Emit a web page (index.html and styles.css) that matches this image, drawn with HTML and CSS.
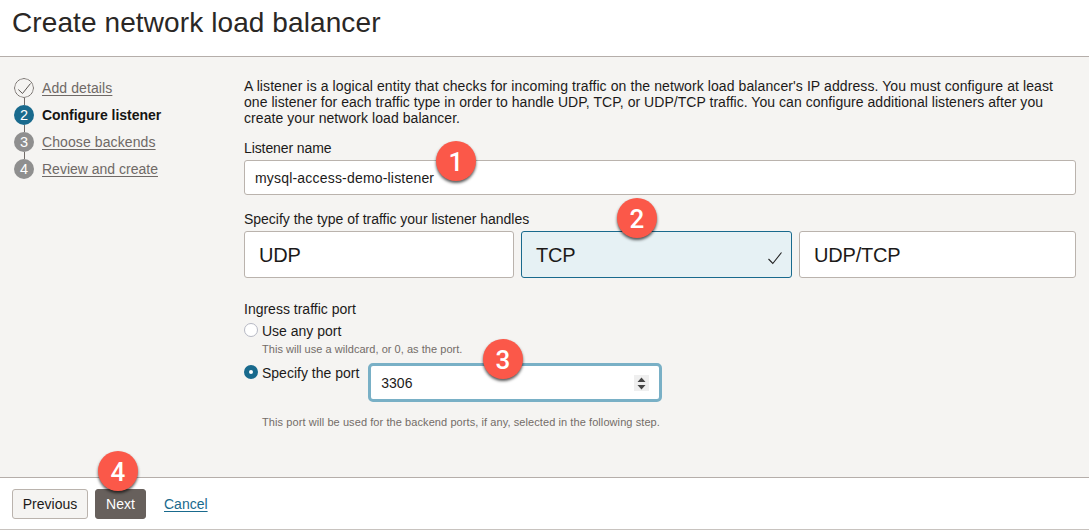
FILE: index.html
```html
<!DOCTYPE html>
<html lang="en">
<head>
<meta charset="utf-8">
<title>Create network load balancer</title>
<link rel="stylesheet" href="styles.css">
</head>
<body>
<div class="page">
  <header class="header"><h1 class="title">Create network load balancer</h1></header>
  <main class="main">
    <nav class="steps">
      <div class="step"><svg class="dot" viewBox="0 0 20 20"><circle cx="10" cy="10" r="9.5" fill="none" stroke="#716b68"/><path d="M4.300 11.500l4.200 4L16.500 5.500" fill="none" stroke="#5c5754"/></svg><a class="step-link s1">Add details</a></div>
      <div class="step"><span class="dot current">2</span><b class="step-name">Configure listener</b></div>
      <div class="step"><span class="dot">3</span><a class="step-link s3">Choose backends</a></div>
      <div class="step"><span class="dot">4</span><a class="step-link s4">Review and create</a></div>
    </nav>
    <section class="content">
      <p class="intro"><span class="l1">A listener is a logical entity that checks for incoming traffic on the network load balancer's IP address. You must configure at least</span><br><span class="l2">one listener for each traffic type in order to handle UDP, TCP, or UDP/TCP traffic. You can configure additional listeners after you</span><br><span class="l3">create your network load balancer.</span></p>
      <div class="label name-label">Listener name</div>
      <div class="field">mysql-access-demo-listener</div>
      <div class="label type-label">Specify the type of traffic your listener handles</div>
      <div class="cards">
        <div class="card">UDP</div>
        <div class="card selected">TCP<svg class="check" viewBox="0 0 16 16"><path d="M1.500 9l4.300 4.500L14.500 2.500" fill="none" stroke="#222" stroke-width="1.100"/></svg></div>
        <div class="card">UDP/TCP</div>
      </div>
      <div class="label port-label">Ingress traffic port</div>
      <div class="option"><span class="radio"></span><span class="any">Use any port</span></div>
      <div class="hint h1">This will use a wildcard, or 0, as the port.</div>
      <div class="option port-option"><span class="radio on"></span><span class="specify">Specify the port</span>
        <div class="port"><span>3306</span><svg class="spin" viewBox="0 0 15 16"><path d="M0 0h15v16H0z" fill="#efefef"/><path d="M3.500 7L7.500 2.500 11.500 7zM3.500 10l4 4.500 4-4.500z" fill="#464646"/></svg></div>
      </div>
      <div class="hint h2">This port will be used for the backend ports, if any, selected in the following step.</div>
    </section>
  </main>
  <footer class="footer">
    <div class="btn prev">Previous</div><div class="btn next">Next</div><a class="cancel">Cancel</a>
  </footer>
  <span class="badge b1">1</span><span class="badge b2">2</span><span class="badge b3">3</span><span class="badge b4">4</span>
</div>
</body>
</html>
```
FILE: styles.css
```css
* { box-sizing: border-box; }
body { margin: 0; font: 14px/16px "Liberation Sans", Arial, sans-serif; color: #1c1a19; }
.page { position: relative; width: 1089px; height: 530px; display: flex; flex-direction: column; overflow: hidden; white-space: nowrap; background: #fff; }
.header { height: 57px; padding: 7px 12px; border-bottom: 1px solid #b5aeaa; }
.title { margin: 0; font-size: 28px; line-height: 32px; font-weight: 400; letter-spacing: .1px; color: #2a2725; }
.main { height: 420px; display: flex; background: #f5f4f2; }
.steps { width: 244px; padding: 21px 0 0 14px; }
.step { display: flex; align-items: center; gap: 8px; height: 20px; margin-bottom: 7px; position: relative; }
.step + .step::before { content: ""; position: absolute; left: 10px; top: -7px; width: 1px; height: 7px; background: #716b68; }
.dot { width: 20px; height: 20px; flex: none; border-radius: 50%; color: #fff; text-align: center; font-size: 14.5px; line-height: 20px; }
span.dot { background: #8f8f8f; }
span.current { background: #196a8d; }
.step-link { color: #6f6966; text-decoration: underline; text-underline-offset: 2px; text-decoration-thickness: 1px; }
.s1, .s3 { letter-spacing: .1px; }
.step-name { letter-spacing: -.04px; color: #161513; }
.content { width: 832px; padding-top: 21px; }
.intro { margin: 0; }
.l1 { letter-spacing: .092px; }
.l2 { letter-spacing: .04px; }
.l3 { letter-spacing: .06px; }
.name-label { margin-top: 14px; letter-spacing: -.1px; }
.field { height: 35px; margin-top: 4px; padding: 9px 10px; border: 1px solid #bab3ad; border-radius: 3px; background: #fff; letter-spacing: .19px; }
.type-label { margin-top: 16px; letter-spacing: -.02px; }
.cards { display: grid; grid-template-columns: 270px 271px 277px; gap: 7px; margin-top: 4px; }
.card { height: 47px; padding: 11px 14px; display: flex; justify-content: space-between; border: 1px solid #bab3ad; border-radius: 3px; background: #fff; font-size: 20px; line-height: 24px; letter-spacing: -.2px; }
.selected { border-color: #196a8d; background: #e6f1f4; }
.check { width: 16px; height: 16px; margin: 7px -6px 0 0; }
.port-label { margin-top: 23px; }
.option { display: flex; gap: 4px; margin-top: 6px; }
.radio { width: 14px; height: 14px; border: 1px solid #b6b8c4; border-radius: 50%; background: #fff; margin-top: -.5px; }
.radio.on { border: 5px solid #196a8d; }
.hint { margin-left: 18px; font-size: 11px; line-height: 14px; color: #736c68; }
.h1 { margin-top: 3px; letter-spacing: .04px; }
.port-option { margin-top: 9px; height: 36px; }
.port { display: flex; justify-content: space-between; align-items: center; width: 294px; height: 39px; margin: -2px 0 0 5px; padding: 0 10px; border: 3px solid #79b0c6; border-radius: 5px; background: #fff; }
.spin { width: 15px; height: 16px; }
.h2 { margin-top: 14px; letter-spacing: .08px; }
.footer { height: 53px; display: flex; padding: 11px 12px; border-top: 1px solid #b5aeaa; border-bottom: 1px solid #c8c3bf; }
.btn { height: 30px; border: 1px solid #bab3ad; border-radius: 3px; background: #f5f4f2; text-align: center; line-height: 28px; }
.prev { width: 76px; }
.next { width: 51px; margin-left: 7px; background: #67605c; border-color: #67605c; color: #fff; }
.cancel { margin-left: 18px; line-height: 30px; color: #196a8d; text-decoration: underline; text-underline-offset: 2px; text-decoration-thickness: 1px; }
.badge { position: absolute; width: 40px; height: 40px; border-radius: 50%; background: #fb5849; color: #fff; font: 500 26px/42px Roboto, "Liberation Sans", sans-serif; text-align: center; box-shadow: 0 2px 3px rgba(0,0,0,.65); }
.b1 { left: 436px; top: 141px; }
.b2 { left: 617px; top: 198px; }
.b3 { left: 483px; top: 339px; }
.b4 { left: 98px; top: 451px; }
```
